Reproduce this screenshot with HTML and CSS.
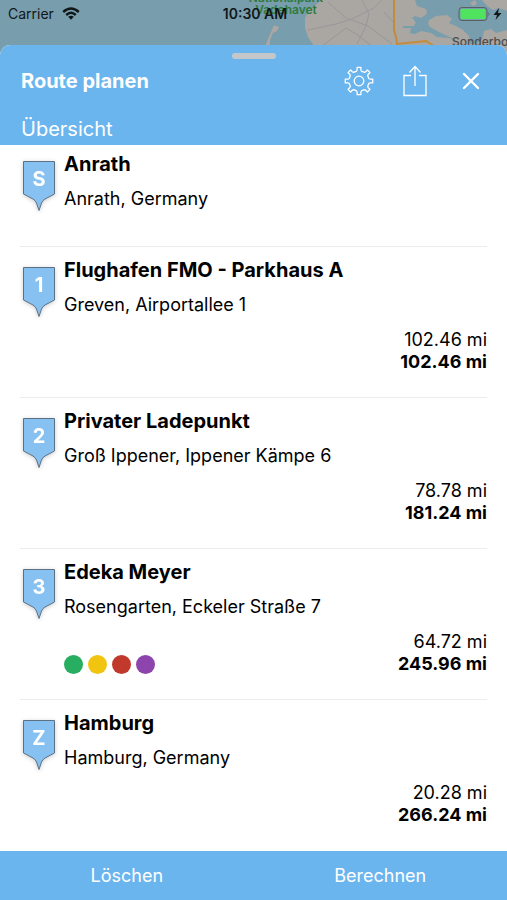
FILE: index.html
```html
<!DOCTYPE html>
<html lang="de">
<head>
<meta charset="utf-8">
<meta name="viewport" content="width=device-width, initial-scale=1">
<title>Route planen</title>
<link rel="stylesheet" href="styles.css">
</head>
<body>
<svg class="symbols" aria-hidden="true">
  <symbol id="pin" viewBox="0 0 34 51">
    <path d="M1.500 1.500H32.500V34L23 39Q20.500 40.500 19.500 43L17 50.500L14.500 43Q13.500 40.500 11 39L1.500 34Z" fill="#86c1f2" stroke="#5c7184" stroke-width="1"/>
  </symbol>
</svg>
<div class="app">
  <div class="status">
    <svg class="map" viewBox="0 0 507 56" preserveAspectRatio="xMidYMin slice" aria-hidden="true">
      <rect width="507" height="56" fill="#789dad"/>
      <path d="M322 0L310 9L305 18L305 28L308 37L314 46V56H507V0Z" fill="#aaa6a1"/>
      <path d="M415 0L409 4L405 12L403 17L414 19L415 23L402 26L403 28L411 28L410 33L418 35L427 40L433 44H507V0Z" fill="#789dad"/>
      <path d="M415 0L417 6L426 9L427 14L421 18L415 16L410 20L416 22L414 26L404 26L400 29L403 32L411 34L409 38L400 40V46H391V0Z" fill="#aaa6a1"/>
      <path d="M429 20L436 16L447 15L452 19L449 23L456 26L463 30L469 36L470 46H458L452 38L445 35L437 31L430 27L428 24Z" fill="#aaa6a1"/>
      <path d="M408 44L411 36L421 31L431 33L437 37L450 38L458 46V56H408Z" fill="#aaa6a1"/>
      <path d="M470 3L475 0L477 4L473 6ZM482 0H507V11L499 8L493 10L487 6Z" fill="#aaa6a1"/>
      <path d="M484 31L491 29L496 33L507 30V56H478L474 46L482 40Z" fill="#aaa6a1"/>
      <path d="M274 25L279 27L277 31L273 33L270 40V46H265L268 39L271 32Z" fill="#aaa6a1"/>
      <g fill="none" stroke="#98979b" stroke-width="1">
        <path d="M328 2L346 18L368 26L392 44M308 30L336 24L352 19L374 8L382 0M322 46L346 28L356 34L372 46M362 0L369 14L366 26L357 44M384 12L393 22"/>
      </g>
      <path d="M394 0V30L396 37L397 44L426 41L434 46" fill="none" stroke="#c38c3c" stroke-width="2"/>
      <g class="map-park"><text x="286" y="2">Nationalpark</text><text x="286" y="14">Vadehavet</text></g>
      <text class="map-town" x="452" y="46">Sonderborg</text>
    </svg>
    <div class="status-row">
      <div class="carrier">
        <span>Carrier</span>
        <svg width="18" height="14" viewBox="0 0 18 14" fill="none" stroke="#101719" stroke-width="2.400" aria-label="WLAN"><path d="M1.200 5Q9 -1.800 16.800 5M4.200 8Q9 3.700 13.800 8"/><path d="M6.200 9.800Q9 7.600 11.800 9.800L9 12.800Z" fill="#101719" stroke="none"/></svg>
      </div>
      <time>10:30 AM</time>
      <div class="power">
        <svg width="44" height="16" viewBox="0 0 44 16" aria-label="Akku lädt"><rect x="1" y="1.500" width="28" height="13" rx="3" fill="none" stroke="#59605f"/><rect x="2.500" y="3" width="25" height="10" rx="1.500" fill="#4fe35f"/><path d="M30.500 6Q32.500 8 30.500 10Z" fill="#59605f"/><path d="M41 2L35.500 9H39L37.500 14L43.500 7H40Z" fill="#101719"/></svg>
      </div>
    </div>
  </div>
  <main class="sheet">
    <header class="head">
      <div class="grabber"></div>
      <div class="head-row">
        <h1>Route planen</h1>
        <div class="tools">
          <button type="button" aria-label="Einstellungen"><svg width="30" height="30" viewBox="-15 -15 30 30" fill="none" stroke="#fff" stroke-width="1.300" stroke-linejoin="round"><circle r="4.800"/><path d="M-2.700 -9.700Q-1.900 -10.300 -1.900 -11.300V-13.700H1.900V-11.300Q1.900 -10.300 2.700 -9.700L4.900 -8.800Q5.900 -8.600 6.700 -9.300L8.400 -11L11 -8.400L9.300 -6.700Q8.600 -5.900 8.800 -4.900L9.700 -2.700Q10.300 -1.900 11.300 -1.900H13.700V1.900H11.300Q10.300 1.900 9.700 2.700L8.800 4.900Q8.600 5.900 9.300 6.700L11 8.400L8.400 11L6.700 9.300Q5.900 8.600 4.900 8.800L2.700 9.700Q1.900 10.300 1.900 11.300V13.700H-1.900V11.300Q-1.900 10.300 -2.700 9.700L-4.900 8.800Q-5.900 8.600 -6.700 9.300L-8.400 11L-11 8.400L-9.300 6.700Q-8.600 5.900 -8.800 4.900L-9.700 2.700Q-10.300 1.900 -11.300 1.900H-13.700V-1.900H-11.300Q-10.300 -1.900 -9.700 -2.700L-8.800 -4.900Q-8.600 -5.900 -9.300 -6.700L-11 -8.400L-8.400 -11L-6.700 -9.300Q-5.900 -8.600 -4.900 -8.800Z"/></svg></button>
          <button type="button" aria-label="Teilen"><svg width="24" height="32" viewBox="0 0 24 32" fill="none" stroke="#fff" stroke-width="1.300"><path d="M8 10.500H1V30.500H23V10.500H16M12 21V1.500M6.500 7.500L12 1.500L17.500 7.500"/></svg></button>
          <button type="button" aria-label="Schließen"><svg width="18" height="18" viewBox="0 0 18 18" fill="none" stroke="#fff" stroke-width="2.400" stroke-linecap="round"><path d="M2 2L16 16M16 2L2 16"/></svg></button>
        </div>
      </div>
      <h2>Übersicht</h2>
    </header>
    <ol class="stops">
      <li class="stop start">
        <div class="pin"><svg width="34" height="51"><use href="#pin"/></svg><span>S</span></div>
        <div class="body"><h3>Anrath</h3><p>Anrath, Germany</p></div>
      </li>
      <li class="stop">
        <div class="pin"><svg width="34" height="51"><use href="#pin"/></svg><span>1</span></div>
        <div class="body"><h3>Flughafen FMO - Parkhaus A</h3><p>Greven, Airportallee 1</p>
          <div class="meta"><div class="miles"><span>102.46 mi</span><strong>102.46 mi</strong></div></div></div>
      </li>
      <li class="stop">
        <div class="pin"><svg width="34" height="51"><use href="#pin"/></svg><span>2</span></div>
        <div class="body"><h3>Privater Ladepunkt</h3><p>Groß Ippener, Ippener Kämpe 6</p>
          <div class="meta"><div class="miles"><span>78.78 mi</span><strong>181.24 mi</strong></div></div></div>
      </li>
      <li class="stop">
        <div class="pin"><svg width="34" height="51"><use href="#pin"/></svg><span>3</span></div>
        <div class="body"><h3>Edeka Meyer</h3><p>Rosengarten, Eckeler Straße 7</p>
          <div class="meta">
            <div class="dots"><i class="green"></i><i class="yellow"></i><i class="red"></i><i class="purple"></i></div>
            <div class="miles"><span>64.72 mi</span><strong>245.96 mi</strong></div></div></div>
      </li>
      <li class="stop">
        <div class="pin"><svg width="34" height="51"><use href="#pin"/></svg><span>Z</span></div>
        <div class="body"><h3>Hamburg</h3><p>Hamburg, Germany</p>
          <div class="meta"><div class="miles"><span>20.28 mi</span><strong>266.24 mi</strong></div></div></div>
      </li>
    </ol>
    <footer class="actions">
      <button type="button">Löschen</button>
      <button type="button">Berechnen</button>
    </footer>
  </main>
</div>
</body>
</html>
```
FILE: styles.css
```css
* { box-sizing: border-box; }
body, h1, h2, h3, p, ol { margin: 0; padding: 0; }
body { font-family: Inter, "Liberation Sans", sans-serif; color: #000; background: #fff; }
button { border: 0; padding: 0; background: none; color: #fff; font: inherit; cursor: pointer; }
svg { display: block; }
.symbols { position: absolute; width: 0; height: 0; }

.app { display: flex; flex-direction: column; min-height: 100vh; }

.status { position: relative; height: 45px; color: #101719; background: #789dad; }
.map { position: absolute; top: 0; left: 0; width: 100%; height: 56px; }
.map-park { font-size: 12px; font-weight: 600; fill: #2d7a3a; text-anchor: middle; }
.map-town { font-size: 12px; font-weight: 500; fill: #4c4c4e; }
.status-row { position: relative; display: grid; grid-template-columns: 1fr auto 1fr; align-items: center; height: 27px; padding: 0 5px 0 8px; font-size: 14px; }
.status-row time { font-weight: 600; }
.carrier { display: flex; align-items: center; gap: 8px; }
.power { justify-self: end; }

.sheet { position: relative; flex: 1; display: flex; flex-direction: column; border-radius: 10px 10px 0 0; overflow: hidden; background: #fff; }
.head { padding: 8px 8px 0 21px; height: 100px; background: #6bb5ee; color: #fff; }
.grabber { position: relative; width: 44px; height: 6px; margin: 0 auto; right: 6px; border-radius: 3px; background: #c3c7ca; }
.head-row { display: flex; align-items: center; justify-content: space-between; height: 44px; }
h1 { font-size: 20px; line-height: 28px; font-weight: 700; }
.tools { display: grid; grid-template-columns: repeat(3, 56px); align-items: center; justify-items: center; }
h2 { margin-top: 12px; font-size: 20px; line-height: 28px; font-weight: 400; }

.stops { flex: 1; padding: 0 20px; list-style: none; }
.stop { display: flex; gap: 8px; padding: 10px 0 24px 2px; border-bottom: 1px solid #ececec; }
.start { padding-top: 6px; padding-bottom: 35px; }
.stop:last-child { border-bottom: 0; }
.pin { position: relative; flex: none; width: 34px; height: 51px; margin-top: 9px; filter: drop-shadow(0 1px 2px rgba(0, 0, 0, 0.2)); }
.pin span { position: absolute; inset: 0 0 auto; color: #fff; font-size: 20px; line-height: 38px; font-weight: 700; text-align: center; }
.body { flex: 1; min-width: 0; }
h3 { font-size: 20px; line-height: 26px; font-weight: 700; }
p { margin-top: 10px; font-size: 18px; line-height: 24px; }
.meta { display: flex; align-items: flex-end; margin-top: 12px; }
.dots { display: flex; gap: 5px; padding-bottom: 1px; }
.dots i { width: 19px; height: 19px; border-radius: 50%; }
.green { background: #27ae60; }
.yellow { background: #f1c40f; }
.red { background: #c0392b; }
.purple { background: #8e44ad; }
.miles { display: flex; flex-direction: column; margin-left: auto; text-align: right; font-size: 18px; line-height: 22px; }
.miles strong { font-weight: 700; }

.actions { display: grid; grid-template-columns: 1fr 1fr; height: 49px; background: #6bb5ee; }
.actions button { font-size: 18px; line-height: 24px; }
```
